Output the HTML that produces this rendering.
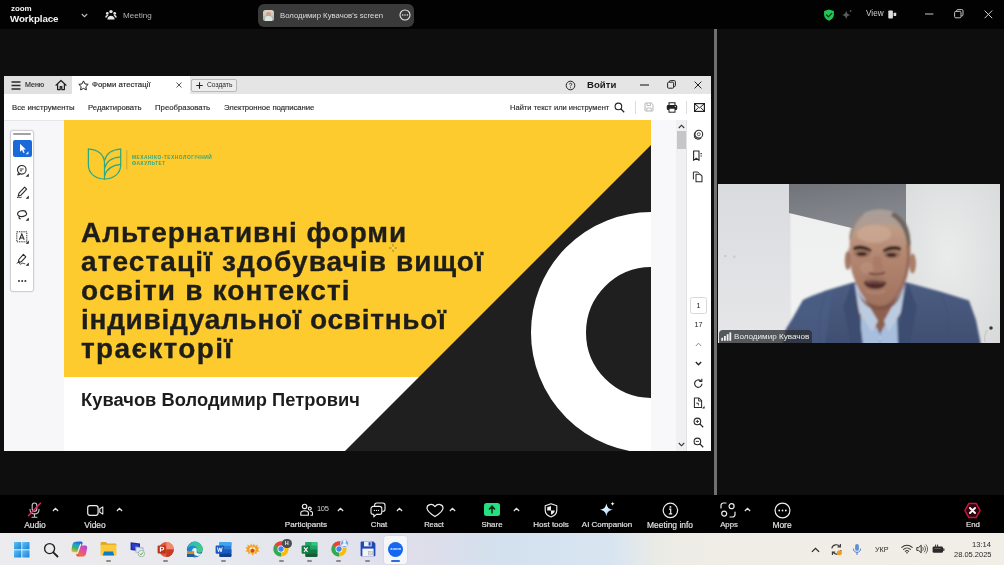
<!DOCTYPE html>
<html><head><meta charset="utf-8">
<style>
*{box-sizing:border-box;margin:0;padding:0}
html,body{width:1004px;height:565px;overflow:hidden;background:#0d0d0d;font-family:"Liberation Sans",sans-serif;}
.abs{position:absolute}
#root{position:relative;width:1004px;height:565px;overflow:hidden;background:#0e0e0e}
#topbar{left:0;top:0;width:1004px;height:28.500px;background:#020202}
#divider{left:713.500px;top:29px;width:3.600px;height:466px;background:#707070}
#botbar{left:0;top:495px;width:1004px;height:38px;background:#000}
#taskbar{left:0;top:533px;width:1004px;height:32px;background:linear-gradient(90deg,#ecebed 0%,#e8e9ee 22%,#dddeea 43%,#d3e1ef 50%,#d8e5f1 61%,#ebebe6 65.500%,#f0ede6 72%,#f1eee7 100%)}
.t{will-change:transform;position:absolute;white-space:nowrap;line-height:1}
/* shared window */
#win{left:4px;top:75px;width:707.300px;height:376px;background:#fff;overflow:hidden}
#tabbar{left:0;top:0;width:708px;height:19px;background:#e5e5e5}
#tab{left:68px;top:0;width:118px;height:19px;background:#fff}
#tools{left:0;top:19px;width:708px;height:26px;background:#fff}
#leftpane{left:0;top:45px;width:59.600px;height:331px;background:#f7f6f9;z-index:2}
#slide{left:59px;top:45px;width:588px;height:331px;background:#fff;overflow:hidden}
#gap{left:647px;top:45px;width:25px;height:331px;background:#f8f7fa}
#scroll{left:672px;top:45px;width:10px;height:331px;background:#f0eff2}
#rightpane{left:682px;top:45px;width:26px;height:331px;background:#fff;border-left:1px solid #e2e2e2}
.hd{font-size:28px;font-weight:700;color:#1d1d1b;line-height:29px;-webkit-text-stroke:0.35px #1d1d1b}
.tb{font-size:7.75px;color:#2a2a2a;-webkit-text-stroke:0.150px #2a2a2a}
.lbl{will-change:transform;position:absolute;white-space:nowrap;line-height:1;color:#e2e2e2;-webkit-text-stroke:0.180px #e2e2e2;font-size:9px;text-align:center;width:80px}
</style></head><body>
<div id="root">
<div id="topbar" class="abs">
  <div class="t" style="left:10.5px;top:4.8px;font-size:8px;font-weight:700;color:#f2f2f2;letter-spacing:-0.1px">zoom</div>
  <div class="t" style="left:10px;top:13.6px;font-size:9.8px;font-weight:700;color:#f4f4f4;letter-spacing:-0.1px">Workplace</div>
  <svg class="abs" style="left:80.5px;top:13px" width="7" height="5" viewBox="0 0 7 5"><path d="M0.8 1L3.5 3.7 6.2 1" fill="none" stroke="#bdbdbd" stroke-width="1.1"/></svg>
  <svg class="abs" style="left:105px;top:9px" width="12" height="12" viewBox="0 0 12 12"><circle cx="6" cy="2.6" r="1.7" fill="#e6e6e6"/><circle cx="2.3" cy="4.4" r="1.4" fill="#e6e6e6"/><circle cx="9.7" cy="4.4" r="1.4" fill="#e6e6e6"/><path d="M2.4 10.6c0-5 7.2-5 7.2 0z" fill="#e6e6e6"/><path d="M0.2 8.6c0-2.6 2.4-3 3.2-2.2-1 .6-1.4 1.4-1.6 2.2zM11.8 8.6c0-2.6-2.4-3-3.2-2.2 1 .6 1.4 1.4 1.6 2.2z" fill="#e6e6e6"/></svg>
  <div class="t" style="left:123px;top:11.8px;font-size:8.1px;color:#b4b4b4">Meeting</div>
  <div class="abs" style="left:258px;top:3.6px;width:155.5px;height:23.2px;background:#3a3a3a;border-radius:6px"></div>
  <div class="abs" style="left:263px;top:10.2px;width:10.5px;height:10.8px;border-radius:2.5px;background:linear-gradient(180deg,#d9d4cc 0%,#cfc6ba 45%,#a9b7a6 70%,#b9c9bd 100%);overflow:hidden"><div class="abs" style="left:3px;top:2px;width:4.5px;height:4.5px;border-radius:50%;background:#c9a58d"></div><div class="abs" style="left:1.5px;top:6.3px;width:7.5px;height:6px;border-radius:3px 3px 0 0;background:#dfe6e2"></div></div>
  <div class="t" style="left:280px;top:12px;font-size:7.78px;color:#dcdcdc">Володимир Кувачов's screen</div>
  <svg class="abs" style="left:398.5px;top:9.2px" width="12" height="12" viewBox="0 0 12 12"><circle cx="6" cy="6" r="5" fill="none" stroke="#e8e8e8" stroke-width="1.1"/><circle cx="3.7" cy="6" r="0.75" fill="#e8e8e8"/><circle cx="6" cy="6" r="0.75" fill="#e8e8e8"/><circle cx="8.3" cy="6" r="0.75" fill="#e8e8e8"/></svg>
  <!-- right controls -->
  <svg class="abs" style="left:822.5px;top:8.5px" width="12" height="12" viewBox="0 0 12 12"><path d="M6 0.4l4.9 1.7v3.7c0 3-2.2 4.9-4.9 5.9C3.3 10.7 1.1 8.8 1.1 5.800V2.100z" fill="#23c552"/><path d="M3.5 6l1.9 1.9 3.3-3.5" fill="none" stroke="#0b3d1b" stroke-width="1.3" stroke-linecap="round" stroke-linejoin="round"/></svg>
  <svg class="abs" style="left:841px;top:8.5px" width="12" height="12" viewBox="0 0 12 12"><path d="M5.2 1.6c.5 2.9 1.5 3.900 4.400 4.400-2.900.5-3.900 1.500-4.400 4.400-.5-2.900-1.500-3.900-4.400-4.400 2.900-.5 3.900-1.500 4.400-4.400z" fill="#5b5b5b"/><circle cx="9.600" cy="1.9" r="0.9" fill="#5b5b5b"/></svg>
  <div class="t" style="left:866px;top:10.4px;font-size:8.2px;color:#d2d2d2">View</div>
  <svg class="abs" style="left:887.5px;top:10px" width="9" height="9" viewBox="0 0 9 9"><rect x="0.3" y="0.5" width="4.6" height="8" rx="0.8" fill="#dcdcdc"/><rect x="5.600" y="2.700" width="2.600" height="3.200" rx="0.500" fill="#dcdcdc"/></svg>
  <svg class="abs" style="left:924.5px;top:13px" width="9" height="2" viewBox="0 0 9 2"><path d="M0 1h8.400" stroke="#c9c9c9" stroke-width="1"/></svg>
  <svg class="abs" style="left:954px;top:9px" width="10" height="10" viewBox="0 0 10 10"><rect x="0.6" y="2.4" width="6.400" height="6.400" rx="1.2" fill="none" stroke="#c4c4c4" stroke-width="1"/><path d="M2.600 2.200V1.800a1.200 1.200 0 0 1 1.200-1.200h4a1.200 1.200 0 0 1 1.200 1.200v4a1.200 1.200 0 0 1-1.200 1.200H7.200" fill="none" stroke="#c4c4c4" stroke-width="1"/></svg>
  <svg class="abs" style="left:984px;top:10px" width="9" height="9" viewBox="0 0 9 9"><path d="M0.600 0.600l7.600 7.600M8.200 0.600L0.600 8.200" stroke="#d2d2d2" stroke-width="1"/></svg>
</div>
<div id="divider" class="abs"></div>

<!-- SHARED WINDOW -->
<div id="win" class="abs">
  <div id="tabbar" class="abs"><div class="abs" style="left:0;top:0;width:708px;height:0.700px;background:#0e0e0e;z-index:3"></div>
    <div class="abs" style="left:0;top:0;width:68px;height:19px;background:#e0e0e0"></div>
    <svg class="abs" style="left:7px;top:6px" width="11" height="9" viewBox="0 0 11 9"><path d="M0.5 1h9M0.5 4.5h9M0.5 8h9" stroke="#2a2a2a" stroke-width="1.3" fill="none"/></svg>
    <div class="t" style="left:21.300px;top:7.200px;font-size:7.1px;color:#2b2b2b;-webkit-text-stroke:0.150px #2b2b2b">Меню</div>
    <svg class="abs" style="left:51px;top:4px" width="12" height="12" viewBox="0 0 12 12"><path d="M1 6.2L6 1.5l5 4.7M2.6 5.2v5.3h2.6V7.6h1.6v2.9h2.6V5.2" stroke="#222" stroke-width="1.25" fill="none" stroke-linejoin="round" stroke-linecap="round"/></svg>
  </div>
  <div id="tab" class="abs">
    <svg class="abs" style="left:6px;top:4.5px" width="11" height="11" viewBox="0 0 11 11"><path d="M5.5 0.9l1.45 3 3.25.45-2.35 2.3.55 3.25L5.5 8.35 2.6 9.9l.55-3.25L.8 4.35l3.25-.45z" stroke="#222" stroke-width="1" fill="none" stroke-linejoin="round"/></svg>
    <div class="t" style="left:20px;top:5.5px;font-size:7.8px;color:#1e1e1e;-webkit-text-stroke:0.15px #1e1e1e">Форми атестації</div>
    <svg class="abs" style="left:104px;top:7px" width="6" height="6" viewBox="0 0 6 6"><path d="M0.5 0.5l5 5M5.5 0.5l-5 5" stroke="#444" stroke-width="0.9"/></svg>
  </div>
  <div class="abs" style="left:186.5px;top:4px;width:46px;height:12.5px;border:1px solid #b9b9b9;border-radius:2px;background:#ededed">
    <svg class="abs" style="left:4.5px;top:2.2px" width="7" height="7" viewBox="0 0 7 7"><path d="M3.5 0.3v6.4M0.3 3.5h6.4" stroke="#222" stroke-width="1.1"/></svg>
    <div class="t" style="left:15.5px;top:2.2px;font-size:6.7px;color:#262626">Создать</div>
  </div>
  <svg class="abs" style="left:560.5px;top:4.5px" width="11" height="11" viewBox="0 0 11 11"><circle cx="5.5" cy="5.5" r="4.3" fill="none" stroke="#222" stroke-width="1"/><path d="M4.3 4.4c0-1.6 2.5-1.6 2.4 0 0 .9-1.2 1-1.2 2" stroke="#222" stroke-width="0.9" fill="none"/><circle cx="5.5" cy="7.8" r="0.55" fill="#222"/></svg>
  <div class="t" style="left:583px;top:5px;font-size:9.6px;font-weight:700;color:#1b1b1b">Войти</div>
  <svg class="abs" style="left:636px;top:9px" width="9" height="2" viewBox="0 0 9 2"><path d="M0 1h9" stroke="#222" stroke-width="1.1"/></svg>
  <svg class="abs" style="left:663px;top:5px" width="9" height="9" viewBox="0 0 9 9"><rect x="0.6" y="2.2" width="6" height="6" rx="1" fill="none" stroke="#222" stroke-width="1"/><path d="M2.4 2V1.6a1 1 0 0 1 1-1h4a1 1 0 0 1 1 1v4a1 1 0 0 1-1 1H7" fill="none" stroke="#222" stroke-width="1"/></svg>
  <svg class="abs" style="left:690px;top:5.5px" width="8" height="8" viewBox="0 0 8 8"><path d="M0.6 0.6l6.8 6.8M7.4 0.6L0.6 7.4" stroke="#222" stroke-width="1"/></svg>

  <div id="tools" class="abs">
    <div class="t tb" style="left:8px;top:9.7px">Все инструменты</div>
    <div class="t tb" style="left:83.5px;top:9.7px">Редактировать</div>
    <div class="t tb" style="left:150.5px;top:9.7px">Преобразовать</div>
    <div class="t tb" style="left:219.5px;top:9.7px;letter-spacing:-0.060px">Электронное подписание</div>
    <div class="t tb" style="left:506px;top:9.7px;font-size:7.55px">Найти текст или инструмент</div>
    <svg class="abs" style="left:610px;top:8px" width="11" height="11" viewBox="0 0 11 11"><circle cx="4.4" cy="4.4" r="3.3" fill="none" stroke="#222" stroke-width="1.1"/><path d="M6.9 6.9l3.3 3.3" stroke="#222" stroke-width="1.3"/></svg>
    <div class="abs" style="left:630.5px;top:7px;width:1px;height:13px;background:#dcdcdc"></div>
    <svg class="abs" style="left:640px;top:8px" width="10" height="10" viewBox="0 0 10 10"><path d="M1 1.8a.8.8 0 0 1 .8-.8h5.6L9 2.6v5.6a.8.8 0 0 1-.8.8H1.8a.8.8 0 0 1-.8-.8z" fill="none" stroke="#b5b5b5" stroke-width="1"/><path d="M3 1.2v2.3h3.6V1.2M2.8 9V6h4.4v3" fill="none" stroke="#b5b5b5" stroke-width="0.9"/></svg>
    <svg class="abs" style="left:661.5px;top:7.5px" width="12" height="11" viewBox="0 0 12 11"><path d="M3 3V0.8h6V3" fill="none" stroke="#222" stroke-width="1.1"/><rect x="0.8" y="3" width="10.4" height="5" rx="1.2" fill="#222"/><rect x="3" y="6.2" width="6" height="4" fill="#fff" stroke="#222" stroke-width="1"/><circle cx="9.3" cy="4.6" r="0.6" fill="#fff"/></svg>
    <div class="abs" style="left:682px;top:7px;width:1px;height:13px;background:#dcdcdc"></div>
    <svg class="abs" style="left:690px;top:8.5px" width="11" height="9" viewBox="0 0 11 9"><rect x="0.6" y="0.6" width="9.8" height="7.8" fill="none" stroke="#222" stroke-width="1.2"/><path d="M0.8 0.9l4.7 4 4.7-4M0.8 8.2l3.4-3.6M10.2 8.2L6.8 4.6" fill="none" stroke="#222" stroke-width="1"/></svg>
  </div>
  <div id="leftpane" class="abs"><div class="abs" style="left:0;top:0;width:59.600px;height:1px;background:#e6e5e8"></div>
    <div class="abs" style="left:6.300px;top:9.500px;width:23.500px;height:162.500px;background:#fff;border:1px solid #d0cfd4;border-radius:3px;box-shadow:0 0 2px rgba(0,0,0,.12)"></div>
    <div class="abs" style="left:9.300px;top:13.200px;width:17.500px;height:1.900px;background:#a2a2a4;border-radius:1px"></div>
    <div class="abs" style="left:9px;top:19.5px;width:18.5px;height:17.5px;background:#1968dc;border-radius:2px"></div>
    <svg class="abs" style="left:13.5px;top:23px" width="11" height="12" viewBox="0 0 11 12"><path d="M2 0.8v8l2-1.8 1.4 3 1.3-.6-1.4-2.9h2.6z" fill="#fff"/><path d="M10.5 8.2v3h-3z" fill="#dfe9fb"/></svg>
    <!-- zoom/comment -->
    <svg class="abs" style="left:12px;top:44px" width="14" height="14" viewBox="0 0 14 14"><circle cx="5.8" cy="5.8" r="4.3" fill="none" stroke="#2a2a2a" stroke-width="1.1"/><path d="M3.8 5h3.8M3.8 6.8h2.4" stroke="#2a2a2a" stroke-width="0.9"/><path d="M2.6 8.8L1.6 11l2.6-.8" fill="none" stroke="#2a2a2a" stroke-width="1"/><path d="M12.8 9.6v3.2H9.6z" fill="#2a2a2a"/></svg>
    <!-- pen -->
    <svg class="abs" style="left:12px;top:66px" width="14" height="14" viewBox="0 0 14 14"><path d="M8.6 1.2l2 2-5.6 6-2.8.9.8-2.9z" fill="none" stroke="#2a2a2a" stroke-width="1.1" stroke-linejoin="round"/><path d="M1 11.6c1.6-1.4 2.8.8 4.6-.4" fill="none" stroke="#2a2a2a" stroke-width="1"/><path d="M12.8 9.6v3.2H9.6z" fill="#2a2a2a"/></svg>
    <!-- lasso -->
    <svg class="abs" style="left:12px;top:88px" width="14" height="14" viewBox="0 0 14 14"><path d="M9.8 3.2C6.5 1.8 1.2 3.2 1.6 6.4c.4 2.6 5 2.6 7.4 1.4 2-1 2.4-3 .2-3.8M3.4 8.6c-.8 1.2-.2 2.2 1 2.2" fill="none" stroke="#2a2a2a" stroke-width="1.1" stroke-linecap="round"/><path d="M12.8 9.6v3.2H9.6z" fill="#2a2a2a"/></svg>
    <!-- text box -->
    <svg class="abs" style="left:12px;top:110.5px" width="14" height="14" viewBox="0 0 14 14"><rect x="0.8" y="0.8" width="10" height="10" fill="none" stroke="#2a2a2a" stroke-width="1" stroke-dasharray="1.3 0.9"/><path d="M3.4 8.8L5.8 2.8l2.4 6M4.3 6.9h3" fill="none" stroke="#2a2a2a" stroke-width="1.05"/><path d="M12.8 9.6v3.2H9.6z" fill="#2a2a2a"/></svg>
    <!-- stamp/sign -->
    <svg class="abs" style="left:12px;top:132.5px" width="14" height="14" viewBox="0 0 14 14"><path d="M7.4 1.4l2.4 2.4-4.6 5-2.8.6.5-2.9z" fill="none" stroke="#2a2a2a" stroke-width="1.1" stroke-linejoin="round"/><path d="M1 10.6c1.2-2.6 3.2-2.4 2.6-.4-.3 1.2 1.2 1.2 2.2.2 1-.9 2 .8 3.4.2" fill="none" stroke="#2a2a2a" stroke-width="0.95"/><path d="M12.8 9.6v3.2H9.6z" fill="#2a2a2a"/></svg>
    <div class="abs" style="left:14px;top:160px;width:1.6px;height:1.6px;background:#333;border-radius:1px;box-shadow:3.2px 0 0 #333,6.4px 0 0 #333"></div>
  </div>
  <div id="slide" class="abs">
    <svg class="abs" style="left:0;top:0" width="588" height="331" viewBox="63 120 588 331">
      <rect x="63" y="120" width="588" height="257" fill="#fecb2e"/>
      <polygon points="651,145 651,451 345,451" fill="#1f1f1f"/>
      <circle cx="651.5" cy="332.5" r="93" fill="none" stroke="#fff" stroke-width="55"/>
      <g fill="none" stroke="#2aa985" stroke-width="1.250" stroke-linecap="round" stroke-linejoin="round">
        <path d="M88.400 149.200V165c0 8.500 7 13.800 16.100 14"/>
        <path d="M88.400 149.200c9 0.300 15.600 4.800 16.100 13.300V179"/>
        <path d="M120.700 149.200V165c0 8.500-7 13.800-16.200 14"/>
        <path d="M120.700 149.200c-8 0.300-14 3.800-16.200 11.300"/>
        <path d="M120.700 156.800c-8 0.600-14.500 4.600-16.200 11.600"/>
        <path d="M120.700 164.400c-8 0.800-14.500 4.800-16.200 11.800"/>
      </g>
      <path d="M126.800 150v19.300" stroke="#b9a02e" stroke-width="0.800"/>
    </svg>
    <svg class="abs" style="left:325.100px;top:123.400px" width="10" height="10" viewBox="0 0 10 10"><path d="M5 1v2.600M5 6.400V9M1 5h2.600M6.400 5H9" stroke="#7d6c2c" stroke-width="0.900" opacity="0.850"/><path d="M5 3.800v2.400M3.800 5h2.400" stroke="#f3e6b0" stroke-width="0.800" opacity="0.800"/></svg>
    <div class="t" style="left:69px;top:36px;font-size:4.850px;font-weight:700;color:#2aa688;letter-spacing:0.520px">МЕХАНІКО-ТЕХНОЛОГІЧНИЙ</div>
    <div class="t" style="left:69px;top:42px;font-size:4.850px;font-weight:700;color:#2aa688;letter-spacing:0.520px">ФАКУЛЬТЕТ</div>
    <div class="t hd" style="left:18px;top:97.6px;letter-spacing:0.95px">Альтернативні форми</div>
    <div class="t hd" style="left:18px;top:126.7px;letter-spacing:1.09px">атестації здобувачів вищої</div>
    <div class="t hd" style="left:18px;top:155.8px;letter-spacing:1.17px">освіти в контексті</div>
    <div class="t hd" style="left:18px;top:184.8px;letter-spacing:0.72px">індивідуальної освітньої</div>
    <div class="t hd" style="left:18px;top:213.8px;letter-spacing:1.35px">траєкторії</div>
    <div class="t" style="left:18.200px;top:270.300px;letter-spacing:0.050px;font-size:18.3px;font-weight:700;color:#1c1c1c;line-height:20px">Кувачов Володимир Петрович</div>
  </div>
  <div id="gap" class="abs"></div>
  <div id="scroll" class="abs">
    <svg class="abs" style="left:1.5px;top:4px" width="7" height="5" viewBox="0 0 7 5"><path d="M0.8 4L3.5 1.2 6.2 4" fill="none" stroke="#333" stroke-width="1.1"/></svg>
    <div class="abs" style="left:0.5px;top:10.5px;width:9px;height:18px;background:#c6c5c8"></div>
    <svg class="abs" style="left:1.5px;top:322px" width="7" height="5" viewBox="0 0 7 5"><path d="M0.8 1L3.5 3.8 6.2 1" fill="none" stroke="#333" stroke-width="1.1"/></svg>
  </div>
  <div id="rightpane" class="abs"><div class="abs" style="left:-1.600px;top:0;width:26px;height:331px">
    <!-- comment icon -->
    <svg class="abs" style="left:7px;top:9px" width="12" height="12" viewBox="0 0 12 12"><circle cx="6.800" cy="5.200" r="3.900" fill="none" stroke="#2a2a2a" stroke-width="1.050"/><path d="M3.300 3.400a4 4 0 0 0 2.800 6.800c1.400 0 2.400-.5 3.100-1.300" fill="none" stroke="#2a2a2a" stroke-width="1.050"/><circle cx="6.800" cy="5.200" r="1.500" fill="none" stroke="#2a2a2a" stroke-width="0.700"/></svg>
    <!-- bookmark -->
    <svg class="abs" style="left:7px;top:29.500px" width="12" height="12" viewBox="0 0 12 12"><path d="M1.6 1h5.4v9.4L4.3 8.2 1.6 10.4z" fill="none" stroke="#2a2a2a" stroke-width="1.1" stroke-linejoin="round"/><path d="M9.2 3v1.2M9.2 5.4v1.2" stroke="#2a2a2a" stroke-width="1.3"/></svg>
    <!-- pages -->
    <svg class="abs" style="left:7px;top:50.800px" width="12" height="12" viewBox="0 0 12 12"><path d="M1.4 8.4V1h4.4l1.6 1.6" fill="none" stroke="#2a2a2a" stroke-width="1"/><path d="M4 3.2h4l2 2v5.6H4z" fill="#fff" stroke="#2a2a2a" stroke-width="1.05" stroke-linejoin="round"/></svg>
    <!-- page number -->
    <div class="abs" style="left:4.5px;top:177px;width:17px;height:17px;border:1px solid #d8d8d8;border-radius:2.5px;background:#fff"></div>
    <div class="t" style="left:4.5px;top:182px;width:17px;text-align:center;font-size:7.2px;color:#222">1</div>
    <div class="t" style="left:4.5px;top:201px;width:17px;text-align:center;font-size:7.2px;color:#222">17</div>
    <svg class="abs" style="left:9.5px;top:222px" width="7" height="5" viewBox="0 0 7 5"><path d="M0.8 4L3.5 1.2 6.2 4" fill="none" stroke="#8a8a8a" stroke-width="1"/></svg>
    <svg class="abs" style="left:9.5px;top:240.5px" width="7" height="5" viewBox="0 0 7 5"><path d="M0.8 1L3.5 3.8 6.2 1" fill="none" stroke="#222" stroke-width="1.3"/></svg>
    <!-- rotate -->
    <svg class="abs" style="left:7.5px;top:258px" width="11" height="11" viewBox="0 0 11 11"><path d="M9 5.8a3.7 3.7 0 1 1-1.3-3" fill="none" stroke="#2a2a2a" stroke-width="1.15"/><path d="M6.2 3.4h2.6V0.8" fill="none" stroke="#2a2a2a" stroke-width="1.15"/></svg>
    <!-- doc -->
    <svg class="abs" style="left:7.5px;top:277px" width="12" height="12" viewBox="0 0 12 12"><path d="M1.4 1h4.6l2.6 2.6v6.8H1.4z" fill="none" stroke="#2a2a2a" stroke-width="1.05" stroke-linejoin="round"/><path d="M5.6 1.2v2.8h2.8M3.2 6.2h2.2v2.2" fill="none" stroke="#2a2a2a" stroke-width="0.9"/><path d="M11.6 9v2.6H9z" fill="#2a2a2a"/></svg>
    <!-- zoom in -->
    <svg class="abs" style="left:7.5px;top:297px" width="11" height="11" viewBox="0 0 11 11"><circle cx="4.4" cy="4.4" r="3.3" fill="none" stroke="#2a2a2a" stroke-width="1.1"/><path d="M6.9 6.9l3.3 3.3" stroke="#2a2a2a" stroke-width="1.3"/><path d="M2.8 4.4h3.2M4.4 2.8v3.2" stroke="#2a2a2a" stroke-width="0.9"/></svg>
    <!-- zoom out -->
    <svg class="abs" style="left:7.5px;top:316.5px" width="11" height="11" viewBox="0 0 11 11"><circle cx="4.4" cy="4.4" r="3.3" fill="none" stroke="#2a2a2a" stroke-width="1.1"/><path d="M6.9 6.9l3.3 3.3" stroke="#2a2a2a" stroke-width="1.3"/><path d="M2.8 4.4h3.2" stroke="#2a2a2a" stroke-width="0.9"/></svg>
  </div></div>
</div>

<!-- VIDEO TILE -->
<div id="video" class="abs" style="left:718px;top:184px;width:282px;height:159px;background:#dcdedf;overflow:hidden">
<svg class="abs" style="left:0;top:0" width="282" height="159" viewBox="718 184 282 159">
<defs>
<linearGradient id="vl" x1="0" y1="0" x2="0" y2="1"><stop offset="0" stop-color="#d9dbde"/><stop offset="1" stop-color="#e7e7e9"/></linearGradient>
<linearGradient id="vm" x1="0" y1="0" x2="0" y2="1"><stop offset="0" stop-color="#eef0ef"/><stop offset="1" stop-color="#f1f2f1"/></linearGradient>
<radialGradient id="vr" cx="0.45" cy="0.45" r="0.8"><stop offset="0" stop-color="#eaecec"/><stop offset="1" stop-color="#d6d8d9"/></radialGradient>
<linearGradient id="vg" x1="0" y1="0" x2="0.3" y2="1"><stop offset="0" stop-color="#6f7379"/><stop offset="1" stop-color="#8b8e93"/></linearGradient>
<linearGradient id="skin" x1="0" y1="0" x2="0" y2="1"><stop offset="0" stop-color="#b0a199"/><stop offset="0.180" stop-color="#c09c87"/><stop offset="0.500" stop-color="#b38670"/><stop offset="1" stop-color="#a0725f"/></linearGradient>
<linearGradient id="suit" x1="0" y1="0" x2="0" y2="1"><stop offset="0" stop-color="#4c5d82"/><stop offset="1" stop-color="#3f4f72"/></linearGradient>
<filter id="bl" x="-5%" y="-5%" width="110%" height="110%"><feGaussianBlur stdDeviation="0.900"/></filter>
<filter id="bl2" x="-5%" y="-5%" width="110%" height="110%"><feGaussianBlur stdDeviation="0.500"/></filter>
</defs>
<g filter="url(#bl2)">
<rect x="716" y="182" width="76" height="163" fill="url(#vl)"/>
<rect x="790.500" y="182" width="116" height="163" fill="url(#vm)"/>
<rect x="905" y="182" width="97" height="163" fill="url(#vr)"/>
<polygon points="789,182 906,182 906,241 789,213" fill="url(#vg)"/>
<rect x="790" y="214" width="1.500" height="130" fill="#e9eaea"/>
<circle cx="725.300" cy="256" r="1.300" fill="#c9cacc"/><circle cx="734.300" cy="256.800" r="1.300" fill="#c9cacc"/>
</g>
<g filter="url(#bl)">
<!-- suit -->
<path d="M783 345L786 329 793 318 803 300 826 290.500 853 282.500 907 282.500 940 291.500 969 300.500 976 320 981 345z" fill="url(#suit)"/>
<path d="M803 300c8-5 20-8 30-11l-8 56h-42l3-16z" fill="#4d5f85" opacity="0.600"/>
<!-- neck -->
<path d="M857 288h43v28l-20 16-23-16z" fill="#8d604e"/>
<!-- shirt -->
<path d="M861 314l13 9 6 11 6-11 11-9 1 31h-37z" fill="#a7bedc"/>
<path d="M855 284l5 0 5 15 13 22-6 11-13-20z" fill="#bccbe0"/>
<path d="M905 284l-5 0-4 15-12 22 5 11 12-20z" fill="#bccbe0"/>
<path d="M880 334v11" stroke="#8aa2c4" stroke-width="1"/>
<circle cx="880" cy="338" r="0.900" fill="#dfe6f0"/>
<!-- lapels -->
<path d="M852 283l7 29 4 33h-12l-8-38z" fill="#3e4e72"/>
<path d="M908 283l-7 29-3 33h12l7-38z" fill="#3e4e72"/>
<path d="M826 292c-6 14-8 30-6 53" stroke="#3e4f74" stroke-width="1.200" fill="none" opacity="0.450"/>
<path d="M941 293c7 14 9 30 7 53" stroke="#3e4f74" stroke-width="1.200" fill="none" opacity="0.450"/>
<!-- ears -->
<ellipse cx="847.800" cy="260.500" rx="3" ry="9.500" fill="#a67a66"/>
<ellipse cx="912.600" cy="263.500" rx="3.400" ry="10" fill="#ab7e69"/>
<!-- head -->
<path d="M880 209.500c20 0 30.500 14 30.500 36 0 14-2 25-5.500 35-5 14-13.500 25.500-25 25.500s-20-11.500-25-25.500c-3.500-10-5.500-21-5.500-35 0-22 10.500-36 30.500-36z" fill="url(#skin)"/>
<!-- scalp tint -->
<path d="M880 209.500c18 0 28.500 11 30.500 28-8-10-17.500-14-30.500-14s-22.500 4-30.500 14c2-17 12.500-28 30.500-28z" fill="#a59c97" opacity="0.600"/>
<!-- hair right -->
<path d="M893 212c10 4 17 14 17.500 32l-3 3c-1.500-16-7.500-26-16.500-31z" fill="#5e5852" opacity="0.800"/>
<path d="M862 213c-8 5-12 14-13 26l2 1c2-12 6-20 13-25z" fill="#8d817a" opacity="0.700"/>
<!-- face side shading -->
<path d="M906 245c2 14 0 28-5 40-4 10-10 18-18 21 12 0 18-10 22-22 4-10 6-25 5-39z" fill="#865c4c" opacity="0.600"/>
<path d="M850 248c0 12 2 24 6 34-5-8-8-20-8-34z" fill="#8a5f4f" opacity="0.400"/>
<!-- eye sockets -->
<ellipse cx="862" cy="253.500" rx="8.500" ry="4" fill="#8b6250" opacity="0.600"/>
<ellipse cx="892" cy="254.500" rx="8.500" ry="4" fill="#8b6250" opacity="0.600"/>
<!-- eyebrows & eyes -->
<path d="M853.500 247c5-2.500 12-2 18 2.500l-0.500 2.500c-6-3-12-3.500-17.500-1.500z" fill="#33251f"/>
<path d="M883 249.500c6-4 12.500-4.500 18-2l-0.500 3.500c-5-2-11-1.500-17 1.500z" fill="#33251f"/>
<ellipse cx="861.800" cy="254" rx="5" ry="1.900" fill="#35241e"/>
<ellipse cx="891.500" cy="255" rx="5" ry="1.900" fill="#35241e"/>
<!-- nose shadow -->
<path d="M874 256c-1 8-3 13-4.500 16 3 3.500 12 3.500 15 0-1.500-3-2.500-8-3.500-16z" fill="#a97b66" opacity="0.800"/>
<path d="M868.500 272.500c3.500 2.600 12 2.600 16.500 0" stroke="#67433a" stroke-width="1.800" fill="none"/>
<!-- mouth -->
<path d="M863.500 282c5.500-2 17-2 23 0.500-2 5-6 6.500-11.500 6.500s-9.500-2-11.500-7z" fill="#542b29"/>
<path d="M866.500 282.700c4.500-0.800 12-0.800 17 0.300" stroke="#cdbab2" stroke-width="0.900" fill="none" opacity="0.500"/>
<path d="M865 279.500c5-1.800 15-1.800 20.500 0" stroke="#94695a" stroke-width="1.600" fill="none" opacity="0.700"/>
<path d="M866 291c5 2.600 14 2.600 19 0" stroke="#b88e7c" stroke-width="1.600" fill="none" opacity="0.700"/>
<!-- chin shade -->
<path d="M858 291c5 11 13 15 22 15s17-4 22-15c-3 13-11 19-22 19s-19-6-22-19z" fill="#7c5244" opacity="0.700"/>
<!-- forehead light -->
<ellipse cx="874" cy="234" rx="17" ry="9" fill="#cdab96" opacity="0.700"/>
<ellipse cx="867" cy="268" rx="7" ry="6" fill="#c39985" opacity="0.450"/>
</g>
<!-- corner object -->
<circle cx="991" cy="328" r="1.800" fill="#3a3a3a"/><path d="M988 330c-3 3-4 7-3 12" stroke="#b9bbbd" stroke-width="0.800" fill="none"/>
<circle cx="986" cy="331" r="1.200" fill="#cfd0d2"/>
</svg>
<div class="abs" style="left:1px;top:146px;width:93px;height:13px;background:rgba(44,46,51,0.780);border-radius:4px 4px 0 0"></div>
<svg class="abs" style="left:2.500px;top:148px" width="11" height="9" viewBox="0 0 11 9"><rect x="0.300" y="5.800" width="1.800" height="3" fill="#f2f2f2"/><rect x="3" y="4" width="1.800" height="4.800" fill="#f2f2f2"/><rect x="5.700" y="2.200" width="1.800" height="6.600" fill="#f2f2f2"/><rect x="8.400" y="0.400" width="1.800" height="8.400" fill="#f2f2f2"/></svg>
<div class="t" style="left:16.300px;top:149.200px;font-size:8.100px;color:#ececec">Володимир Кувачов</div>
</div>

<div id="botbar" class="abs">
  <!-- audio -->
  <svg class="abs" style="left:27px;top:6.500px" width="15" height="17" viewBox="0 0 15 17"><rect x="5.200" y="1" width="4.600" height="8.200" rx="2.300" fill="none" stroke="#c9c9c9" stroke-width="1.1"/><path d="M3 7.400c0 6 9 6 9 0M7.500 12v3M5 15.200h5" fill="none" stroke="#c9c9c9" stroke-width="1.1" stroke-linecap="round"/><path d="M1.500 13.800L13.400 1.200" stroke="#e5245c" stroke-width="1.500" stroke-linecap="round"/></svg>
  <svg class="abs" style="left:51.5px;top:11.5px" width="7" height="5" viewBox="0 0 7 5"><path d="M0.9 4L3.5 1.3 6.1 4" fill="none" stroke="#e4e4e4" stroke-width="1.25"/></svg><div class="lbl" style="left:-5.5px;top:26px;font-size:8.45px">Audio</div>
  <!-- video -->
  <svg class="abs" style="left:87px;top:9.500px" width="17" height="11" viewBox="0 0 17 11"><rect x="0.700" y="0.700" width="10.400" height="9.600" rx="2.200" fill="none" stroke="#ededed" stroke-width="1.2"/><path d="M12.800 3.800l3-1.900v7.200l-3-1.900z" fill="none" stroke="#ededed" stroke-width="1.1" stroke-linejoin="round"/></svg>
  <svg class="abs" style="left:116.0px;top:11.5px" width="7" height="5" viewBox="0 0 7 5"><path d="M0.9 4L3.5 1.3 6.1 4" fill="none" stroke="#e4e4e4" stroke-width="1.25"/></svg><div class="lbl" style="left:55.400000000000006px;top:26px;font-size:8.45px">Video</div>
  <!-- participants -->
  <svg class="abs" style="left:299.500px;top:8px" width="13" height="14" viewBox="0 0 13 14"><circle cx="4.600" cy="3.400" r="2.200" fill="none" stroke="#ededed" stroke-width="1.150"/><path d="M0.800 12.200v-2.200c0-3 7.600-3 7.600 0v2.200z" fill="none" stroke="#ededed" stroke-width="1.150" stroke-linejoin="round"/><circle cx="9.800" cy="5.600" r="1.500" fill="none" stroke="#ededed" stroke-width="1.050"/><path d="M10 8.200c2.400-.2 2.600 1.200 2.600 4h-2.200" fill="none" stroke="#ededed" stroke-width="1.050" stroke-linejoin="round"/></svg>
  <div class="t" style="left:317px;top:9.500px;font-size:7.500px;color:#d0d0d0;letter-spacing:-0.300px">105</div>
  <svg class="abs" style="left:337.3px;top:11.5px" width="7" height="5" viewBox="0 0 7 5"><path d="M0.9 4L3.5 1.3 6.1 4" fill="none" stroke="#e4e4e4" stroke-width="1.25"/></svg><div class="lbl" style="left:266.2px;top:26px;font-size:8.1px">Participants</div>
  <!-- chat -->
  <svg class="abs" style="left:370px;top:7px" width="16" height="16" viewBox="0 0 16 16"><path d="M4.600 4V3.200a2.200 2.200 0 0 1 2.200-2.200h6a2.200 2.200 0 0 1 2.200 2.200v4a2.200 2.200 0 0 1-2.200 2.200h-.400" fill="none" stroke="#ededed" stroke-width="1.1"/><path d="M3.200 4.400h6.400a2.200 2.200 0 0 1 2.200 2.200v3.600a2.200 2.200 0 0 1-2.200 2.200H6.400L3.800 14.800v-2.400h-.600A2.200 2.200 0 0 1 1 10.200V6.600a2.200 2.200 0 0 1 2.200-2.200z" fill="none" stroke="#ededed" stroke-width="1.1" stroke-linejoin="round"/><circle cx="4.400" cy="8.400" r="0.650" fill="#ededed"/><circle cx="6.400" cy="8.400" r="0.650" fill="#ededed"/><circle cx="8.400" cy="8.400" r="0.650" fill="#ededed"/></svg>
  <svg class="abs" style="left:396.3px;top:11.5px" width="7" height="5" viewBox="0 0 7 5"><path d="M0.9 4L3.5 1.3 6.1 4" fill="none" stroke="#e4e4e4" stroke-width="1.25"/></svg><div class="lbl" style="left:338.6px;top:26px;font-size:7.8px">Chat</div>
  <!-- react -->
  <svg class="abs" style="left:425.500px;top:7.500px" width="18" height="15" viewBox="0 0 18 15"><path d="M9 13.600C4.600 10.800 1 8.200 1 4.900 1 1.400 6.200 0 9 3.600 11.800 0 17 1.400 17 4.900c0 3.300-3.600 5.900-8 8.700z" fill="none" stroke="#ededed" stroke-width="1.2" stroke-linejoin="round"/></svg>
  <svg class="abs" style="left:448.5px;top:11.5px" width="7" height="5" viewBox="0 0 7 5"><path d="M0.9 4L3.5 1.3 6.1 4" fill="none" stroke="#e4e4e4" stroke-width="1.25"/></svg><div class="lbl" style="left:394.1px;top:26px;font-size:7.55px">React</div>
  <!-- share -->
  <div class="abs" style="left:484px;top:8.200px;width:15.800px;height:12.800px;background:#25e07f;border-radius:2.500px"></div>
  <svg class="abs" style="left:487.900px;top:10.200px" width="8" height="9" viewBox="0 0 8 9"><path d="M4 8.500V1.800M1 4.400L4 1.200 7 4.400" fill="none" stroke="#0a2a17" stroke-width="1.500" stroke-linejoin="miter"/></svg>
  <svg class="abs" style="left:512.7px;top:11.5px" width="7" height="5" viewBox="0 0 7 5"><path d="M0.9 4L3.5 1.3 6.1 4" fill="none" stroke="#e4e4e4" stroke-width="1.25"/></svg><div class="lbl" style="left:452.4px;top:26px;font-size:7.9px">Share</div>
  <!-- host tools -->
  <svg class="abs" style="left:543.500px;top:7.500px" width="14" height="15" viewBox="0 0 14 15"><path d="M7 0.800l5.800 2v4.400c0 3.400-2.600 5.600-5.800 6.800C3.800 12.800 1.200 10.600 1.200 7.200V2.800z" fill="none" stroke="#ededed" stroke-width="1.150" stroke-linejoin="round"/><path d="M7 3v4.400H3.200V4.200zM7 7.400h3.800c-.2 2-1.600 3.400-3.800 4.400z" fill="#ededed"/></svg>
  <div class="lbl" style="left:510.79999999999995px;top:26px;font-size:8.0px">Host tools</div>
  <!-- AI companion -->
  <svg class="abs" style="left:599px;top:6px" width="17" height="17" viewBox="0 0 17 17"><defs><linearGradient id="aig" x1="0" y1="0" x2="1" y2="1"><stop offset="0" stop-color="#ffffff"/><stop offset="0.500" stop-color="#d7ecff"/><stop offset="1" stop-color="#7fb6f5"/></linearGradient></defs><path d="M7.400 2.200c.8 4.400 2.200 5.800 6.600 6.600-4.400.8-5.800 2.200-6.600 6.600-.8-4.400-2.200-5.800-6.600-6.600 4.400-.8 5.800-2.200 6.600-6.600z" fill="url(#aig)"/><path d="M13.600 0.600c.2 1.400.8 2 2.200 2.200-1.400.2-2 .8-2.200 2.200-.2-1.400-.8-2-2.200-2.200 1.400-.2 2-.8 2.200-2.200z" fill="#f4f9ff"/></svg>
  <div class="lbl" style="left:567.4px;top:26px;font-size:7.95px">AI Companion</div>
  <!-- meeting info -->
  <svg class="abs" style="left:662px;top:6.500px" width="17" height="17" viewBox="0 0 17 17"><circle cx="8.400" cy="8.400" r="7.200" fill="none" stroke="#ededed" stroke-width="1.2"/><circle cx="8.400" cy="4.900" r="0.950" fill="#ededed"/><path d="M7 7.200h1.700v4.600M6.800 11.900h3.400" fill="none" stroke="#ededed" stroke-width="1.2"/></svg>
  <div class="lbl" style="left:630px;top:26px;font-size:8.45px">Meeting info</div>
  <!-- apps -->
  <svg class="abs" style="left:720px;top:7px" width="16" height="16" viewBox="0 0 16 16"><path d="M1 6V3.400A2.400 2.400 0 0 1 3.400 1H6M15 10v2.600a2.400 2.400 0 0 1-2.400 2.400H10" fill="none" stroke="#ededed" stroke-width="1.2" stroke-linecap="round"/><circle cx="11.600" cy="4.200" r="2.500" fill="none" stroke="#ededed" stroke-width="1.2"/><circle cx="4.200" cy="11.600" r="2.500" fill="none" stroke="#ededed" stroke-width="1.2"/></svg>
  <svg class="abs" style="left:743.9px;top:11.5px" width="7" height="5" viewBox="0 0 7 5"><path d="M0.9 4L3.5 1.3 6.1 4" fill="none" stroke="#e4e4e4" stroke-width="1.25"/></svg><div class="lbl" style="left:688.7px;top:26px;font-size:7.75px">Apps</div>
  <!-- more -->
  <svg class="abs" style="left:773.500px;top:6.500px" width="17" height="17" viewBox="0 0 17 17"><circle cx="8.500" cy="8.500" r="7.400" fill="none" stroke="#ededed" stroke-width="1.2"/><circle cx="5.200" cy="8.500" r="0.900" fill="#ededed"/><circle cx="8.500" cy="8.500" r="0.900" fill="#ededed"/><circle cx="11.800" cy="8.500" r="0.900" fill="#ededed"/></svg>
  <div class="lbl" style="left:741.7px;top:26px;font-size:8.45px">More</div>
  <!-- end -->
  <svg class="abs" style="left:963.500px;top:6.500px" width="17" height="17" viewBox="0 0 17 17"><path d="M4.700 1.600h7.600l3.800 6.900-3.800 6.900H4.700L.9 8.500z" fill="#2a0510" stroke="#c8143f" stroke-width="1.500" stroke-linejoin="round"/><path d="M6 6l5 5M11 6l-5 5" stroke="#fff" stroke-width="1.900" stroke-linecap="round"/></svg>
  <div class="lbl" style="left:932.5px;top:26px;font-size:7.8px">End</div>
</div>
<div id="taskbar" class="abs">
  <!-- windows -->
  <svg class="abs" style="left:13.500px;top:9px" width="16" height="16" viewBox="0 0 16 16"><defs><linearGradient id="wg" x1="0" y1="0" x2="1" y2="1"><stop offset="0" stop-color="#5cc3f6"/><stop offset="1" stop-color="#1b7fd8"/></linearGradient></defs><rect x="0" y="0" width="7.300" height="7.300" rx="0.600" fill="url(#wg)"/><rect x="8.200" y="0" width="7.300" height="7.300" rx="0.600" fill="url(#wg)"/><rect x="0" y="8.200" width="7.300" height="7.300" rx="0.600" fill="url(#wg)"/><rect x="8.200" y="8.200" width="7.300" height="7.300" rx="0.600" fill="url(#wg)"/></svg>
  <!-- search -->
  <svg class="abs" style="left:43px;top:9px" width="16" height="16" viewBox="0 0 16 16"><circle cx="6.600" cy="6.600" r="5" fill="none" stroke="#1f1f1f" stroke-width="1.350"/><path d="M10.300 10.300l4.200 4.200" stroke="#1f1f1f" stroke-width="1.800" stroke-linecap="round"/></svg>
  <!-- copilot -->
  <svg class="abs" style="left:71.300px;top:8.300px" width="17" height="17" viewBox="0 0 17 17"><defs><linearGradient id="cp1" x1="0.600" y1="0" x2="0.300" y2="1"><stop offset="0" stop-color="#1f5fd8"/><stop offset="0.350" stop-color="#1da7c9"/><stop offset="0.650" stop-color="#46b35a"/><stop offset="1" stop-color="#f2b922"/></linearGradient><linearGradient id="cp2" x1="0.800" y1="0" x2="0.200" y2="1"><stop offset="0" stop-color="#a94be0"/><stop offset="0.450" stop-color="#e4509a"/><stop offset="0.800" stop-color="#f4694a"/><stop offset="1" stop-color="#e8501f"/></linearGradient></defs><path d="M1.400 3.400Q1.800 0.800 4.600 0.700L9.800 0.500Q12.200 0.700 11.400 2.900L8.400 9.800Q7.700 11.200 5.800 11.200L2 11.200Q0.200 10.800 0.500 8.800Z" fill="url(#cp1)"/><path d="M6.600 15.600Q4.700 15.200 5.400 13.200L8.500 6Q9.300 4.500 11.200 4.500L14.600 4.500Q16.600 4.900 16.200 7L15 12.800Q14.400 15.600 11.600 15.600Z" fill="url(#cp2)"/><path d="M9.600 3.400L6.400 12.400" stroke="#f4f1f6" stroke-width="1.300" stroke-linecap="round"/></svg>
  <!-- folder -->
  <svg class="abs" style="left:100px;top:8.400px" width="17" height="16" viewBox="0 0 17 16"><path d="M0.600 2.200A1.200 1.200 0 0 1 1.800 1h4l1.600 1.600h7.800a1.200 1.200 0 0 1 1.200 1.200V5H0.600z" fill="#e5a51c"/><rect x="0.600" y="3.800" width="15.800" height="10.800" rx="1.200" fill="#fbcb3c"/><path d="M4 10.400h9l1.200 4.200H2.800z" fill="#1279c4"/></svg>
  <div class="abs" style="left:105.7px;top:27px;width:5px;height:1.600px;border-radius:1px;background:#8a8a8a"></div>
  <!-- remote desktop -->
  <svg class="abs" style="left:129px;top:7.700px" width="17" height="17" viewBox="0 0 17 17"><path d="M1.600 1.200l9.400 1.200v7.800L1.600 9z" fill="#1a25a8"/><path d="M3 2.600l6.800.8v5.200L3 7.800z" fill="#2a3fc8"/><path d="M6.400 5.600l8.200 1v6L6.400 11.600z" fill="#9fb4d6"/><path d="M7.400 6.800l6.200.8v4L7.400 10.800z" fill="#dfe7f4"/><circle cx="12.400" cy="12.600" r="3.200" fill="#eaf1ea" stroke="#8aa68a" stroke-width="0.700"/><path d="M10.800 12.600l1.200 1.200 2-2.400" fill="none" stroke="#4f9a4f" stroke-width="1"/></svg>
  <!-- powerpoint -->
  <svg class="abs" style="left:157px;top:7.700px" width="17" height="17" viewBox="0 0 17 17"><circle cx="9.400" cy="8.500" r="7.400" fill="#e2573a"/><path d="M9.400 1.100a7.400 7.400 0 0 1 7.400 7.400H9.400z" fill="#f08a6a"/><path d="M9.400 8.500h7.400a7.400 7.400 0 0 1-7.400 7.400z" fill="#c53a22"/><rect x="0.600" y="4.400" width="8.200" height="8.200" rx="1" fill="#b8321c"/><path d="M3.400 10.800V6.200h1.800c2 0 2 2.800 0 2.800H3.400" fill="none" stroke="#fff" stroke-width="1.150"/></svg>
  <div class="abs" style="left:163.0px;top:27px;width:5px;height:1.600px;border-radius:1px;background:#8a8a8a"></div>
  <!-- edge -->
  <svg class="abs" style="left:185.500px;top:7.500px" width="17" height="17" viewBox="0 0 17 17"><defs><linearGradient id="eg" x1="0" y1="0.200" x2="1" y2="0.800"><stop offset="0" stop-color="#1474c8"/><stop offset="0.550" stop-color="#1d9bd6"/><stop offset="1" stop-color="#0c59a4"/></linearGradient><linearGradient id="eg2" x1="0" y1="0" x2="1" y2="1"><stop offset="0" stop-color="#2bb5c9"/><stop offset="1" stop-color="#4fd06a"/></linearGradient></defs><circle cx="8.800" cy="8.500" r="7.900" fill="url(#eg)"/><path d="M8.800 0.600a7.900 7.900 0 0 1 7.900 7.900c0 2-1.200 3.200-3 3.200-2.400 0-3-1.600-2.600-2.800C11.600 6.600 9.600 4.600 6.400 4.800 4.200 5 2.600 6.200 1.600 8A7.900 7.900 0 0 1 8.800 0.600z" fill="url(#eg2)"/><path d="M6.200 9.400c.4-2 2.200-2.800 3.600-2.200 1.200.6 1 2 .8 2.800-.4 1.400.8 2.800 3 2.800 1 0 2-.4 2.600-1-1 2.800-4 3.600-6.400 2.800-2.400-.8-4-3-3.600-5.200z" fill="#e8f3f8"/><rect x="1" y="10.200" width="7.200" height="5.800" fill="#d88a1c"/><rect x="1" y="13" width="7.200" height="3" fill="#1f5e9c"/></svg>
  <!-- word -->
  <svg class="abs" style="left:214.500px;top:7.700px" width="17" height="17" viewBox="0 0 17 17"><rect x="4.400" y="1" width="12" height="15" rx="1.200" fill="#2b7cd3"/><rect x="4.400" y="1" width="12" height="3.800" fill="#41a5ee"/><rect x="4.400" y="8.400" width="12" height="3.800" fill="#185abd"/><rect x="4.400" y="12.200" width="12" height="3.800" rx="1" fill="#103f91"/><rect x="0.600" y="4.400" width="8.400" height="8.400" rx="1" fill="#185abd"/><path d="M2.400 6.400l1.200 4.400 1.200-4 1.200 4 1.200-4.400" fill="none" stroke="#fff" stroke-width="0.950" stroke-linejoin="round"/></svg>
  <div class="abs" style="left:220.8px;top:27px;width:5px;height:1.600px;border-radius:1px;background:#8a8a8a"></div>
  <!-- xnview -->
  <svg class="abs" style="left:244px;top:9.500px" width="17" height="13.500" viewBox="0 0 17 15"><path d="M8.500 3.200L10 0.600l1.400 2.800 2.800-1.800-.4 3 2.800.4-2.200 2 1.800 2.400-3 .2-.2 3-2.600-1.600L8.500 14l-1.900-3-2.600 1.600-.2-3-3-.2L2.600 7 .4 5l2.800-.4-.4-3 2.800 1.800L7 .6z" fill="#f2a024"/><circle cx="8.500" cy="7.800" r="3.800" fill="#f7c85a"/><circle cx="8.500" cy="8.600" r="2.200" fill="#d8432a"/><circle cx="6.800" cy="6" r="0.900" fill="#fff"/><circle cx="10.200" cy="6" r="0.900" fill="#fff"/></svg>
  <!-- chrome H -->
  <svg class="abs" style="left:273px;top:8.300px" width="16" height="16" viewBox="0 0 16 16"><circle cx="8" cy="8" r="7.600" fill="#fbbc05"/><path d="M8 8L1.420 4.200A7.600 7.600 0 0 1 14.580 4.200z" fill="#ea4335"/><path d="M8 8L1.420 4.200A7.600 7.600 0 0 0 8 15.600z" fill="#34a853"/><path d="M8 4.200h6.580A7.600 7.600 0 0 0 1.420 4.200z" fill="#ea4335"/><circle cx="8" cy="8" r="3.500" fill="#fff"/><circle cx="8" cy="8" r="2.700" fill="#4285f4"/></svg>
  <div class="abs" style="left:282px;top:5.500px;width:9.600px;height:9.600px;border-radius:50%;background:#4a4e52"></div>
  <div class="t" style="left:282px;top:7.700px;width:9.600px;text-align:center;font-size:5.500px;font-weight:700;color:#e8e8e8">H</div>
  <div class="abs" style="left:278.7px;top:27px;width:5px;height:1.600px;border-radius:1px;background:#8a8a8a"></div>
  <!-- excel -->
  <svg class="abs" style="left:301px;top:7.700px" width="17" height="17" viewBox="0 0 17 17"><rect x="4.400" y="1" width="12" height="15" rx="1.200" fill="#21a366"/><rect x="4.400" y="1" width="6" height="7.500" fill="#21a366"/><rect x="10.400" y="1" width="6" height="3.800" fill="#33c481"/><rect x="10.400" y="4.800" width="6" height="3.700" fill="#21a366"/><rect x="4.400" y="8.500" width="12" height="3.700" fill="#107c41"/><rect x="4.400" y="12.200" width="12" height="3.800" rx="1" fill="#185c37"/><rect x="0.600" y="4.400" width="8.400" height="8.400" rx="1" fill="#107c41"/><path d="M3 6.400l3.600 4.600M6.600 6.400L3 11" stroke="#fff" stroke-width="1.100"/></svg>
  <div class="abs" style="left:306.7px;top:27px;width:5px;height:1.600px;border-radius:1px;background:#8a8a8a"></div>
  <!-- chrome 2 -->
  <svg class="abs" style="left:330.500px;top:8.300px" width="16" height="16" viewBox="0 0 16 16"><circle cx="8" cy="8" r="7.600" fill="#fbbc05"/><path d="M8 8L1.420 4.200A7.600 7.600 0 0 1 14.580 4.200z" fill="#ea4335"/><path d="M8 8L1.420 4.200A7.600 7.600 0 0 0 8 15.600z" fill="#34a853"/><path d="M8 4.200h6.580A7.600 7.600 0 0 0 1.420 4.200z" fill="#ea4335"/><circle cx="8" cy="8" r="3.500" fill="#fff"/><circle cx="8" cy="8" r="2.700" fill="#4285f4"/></svg>
  <div class="abs" style="left:339.800px;top:5.500px;width:9.400px;height:9.400px;border-radius:50%;background:#6ea2e6;border:0.800px solid #dfe9f6"></div>
  <div class="abs" style="left:343.200px;top:7.400px;width:2.600px;height:2.600px;border-radius:50%;background:#eaf2fc"></div>
  <div class="abs" style="left:342px;top:10.400px;width:5px;height:2.600px;border-radius:2.500px 2.500px 0 0;background:#eaf2fc"></div>
  <div class="abs" style="left:336.0px;top:27px;width:5px;height:1.600px;border-radius:1px;background:#8a8a8a"></div>
  <!-- floppy -->
  <svg class="abs" style="left:359.500px;top:8.300px" width="16" height="16" viewBox="0 0 16 16"><path d="M0.600 1.400a.8.800 0 0 1 .8-.8h12l2 2v11.800a.8.800 0 0 1-.8.800H1.400a.8.800 0 0 1-.8-.8z" fill="#1f49b8"/><rect x="4" y="0.600" width="7.600" height="4.800" fill="#e9eef8"/><rect x="8.600" y="1.200" width="2" height="3.400" fill="#1f49b8"/><rect x="2.400" y="7.600" width="11.200" height="7.600" fill="#f4f4f6"/><rect x="8.400" y="10.600" width="4.200" height="3.400" fill="#d9d9de" stroke="#9a9aa2" stroke-width="0.400"/></svg>
  <div class="abs" style="left:364.5px;top:27px;width:5px;height:1.600px;border-radius:1px;background:#8a8a8a"></div>
  <!-- zoom active -->
  <div class="abs" style="left:383.500px;top:2.500px;width:23.500px;height:28px;border-radius:3px;background:rgba(255,255,255,0.700);box-shadow:0 0 0 0.600px rgba(0,0,0,0.050)"></div>
  <div class="abs" style="left:387.800px;top:8.600px;width:15.600px;height:15.600px;border-radius:50%;background:#1467f0"></div>
  <div class="t" style="left:387.800px;top:14.300px;width:15.600px;text-align:center;font-size:4.200px;font-weight:700;color:#e8f0ff">zoom</div>
  <div class="abs" style="left:390.95px;top:27px;width:9.5px;height:1.600px;border-radius:1px;background:#2f6bd8"></div>
  <!-- tray -->
  <svg class="abs" style="left:810.500px;top:13.500px" width="9" height="6" viewBox="0 0 9 6"><path d="M0.900 4.900L4.500 1.300 8.100 4.900" fill="none" stroke="#2a2a2a" stroke-width="1.250"/></svg>
  <svg class="abs" style="left:829.500px;top:10px" width="13" height="13" viewBox="0 0 13 13"><path d="M1.800 5.400a4.600 4.600 0 0 1 8.200-1.800M11 7.200a4.600 4.600 0 0 1-8.200 2" fill="none" stroke="#3a3a3a" stroke-width="1.150"/><path d="M10.400 1v2.900H7.600M2.400 12V9.100h2.800" fill="none" stroke="#3a3a3a" stroke-width="1.150"/><circle cx="9.400" cy="9.800" r="2.500" fill="#f59a23"/></svg>
  <svg class="abs" style="left:851.500px;top:9.500px" width="10" height="13" viewBox="0 0 10 13"><rect x="3.100" y="1" width="3.800" height="6.800" rx="1.900" fill="#5f8ed8"/><path d="M1.400 6c0 4.600 7.200 4.600 7.200 0M5 9.600v2" fill="none" stroke="#4f7fcb" stroke-width="1" stroke-linecap="round"/></svg>
  <div class="t" style="left:874.500px;top:12.800px;font-size:7.200px;color:#2c2c2c">УКР</div>
  <svg class="abs" style="left:900.500px;top:11px" width="12" height="10" viewBox="0 0 12 10"><path d="M0.800 3.400c3-3 7.400-3 10.400 0M2.600 5.400c2-2 4.800-2 6.800 0M4.300 7.300c1-1 2.400-1 3.400 0" fill="none" stroke="#333" stroke-width="1.050" stroke-linecap="round"/><circle cx="6" cy="8.800" r="0.800" fill="#333"/></svg>
  <svg class="abs" style="left:916px;top:11px" width="12" height="10" viewBox="0 0 12 10"><path d="M0.800 3.600h1.800L5.200 1.200v7.600L2.600 6.400H0.800z" fill="none" stroke="#333" stroke-width="1" stroke-linejoin="round"/><path d="M6.800 3.400c.8.800.8 2.400 0 3.200M8.400 2c1.600 1.600 1.600 4.400 0 6M10 0.800c2.200 2.400 2.200 6 0 8.400" fill="none" stroke="#555" stroke-width="0.900" stroke-linecap="round"/></svg>
  <svg class="abs" style="left:931.500px;top:11px" width="13" height="10" viewBox="0 0 13 10"><rect x="0.600" y="2.400" width="10.400" height="6.400" rx="1.400" fill="#2a2a2a"/><rect x="11.200" y="4.200" width="1.200" height="2.800" rx="0.500" fill="#2a2a2a"/><path d="M3.600 0.600v2.200M5.600 0.600v2.200" stroke="#2a2a2a" stroke-width="1"/><path d="M2.600 4.400h6" stroke="#f0f0f0" stroke-width="0.600" opacity="0.500"/></svg>
  <div class="t" style="right:12.500px;top:8px;font-size:7.600px;color:#2a2a2a;text-align:right">13:14</div>
  <div class="t" style="right:12.500px;top:18.200px;font-size:7.500px;color:#2a2a2a;text-align:right">28.05.2025</div>
</div>
</div>
</body></html>
